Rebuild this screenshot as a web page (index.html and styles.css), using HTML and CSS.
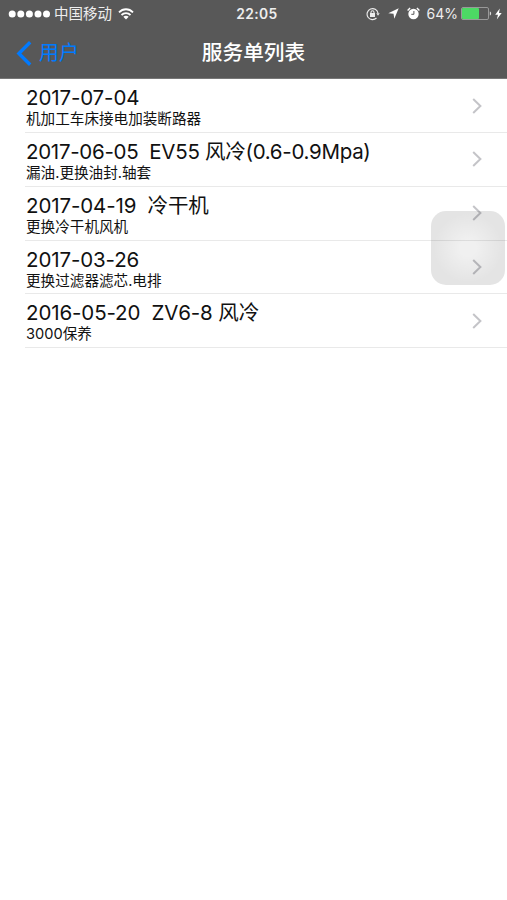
FILE: index.html
```html
<!DOCTYPE html>
<html lang="zh-CN">
<head>
    <meta charset="UTF-8">
    <meta name="viewport" content="width=device-width, initial-scale=1.0">
    <title>服务单列表</title>
    <link rel="stylesheet" href="styles.css">
</head>
<body>
    <header class="header">
        <div class="status">
            <div class="status-left">
                <svg class="signal" width="42" height="10" viewBox="0 0 42 10" fill="#fff">
                    <circle cx="4.2" cy="5" r="3.5"/><circle cx="12.8" cy="5" r="3.5"/><circle cx="21.4" cy="5" r="3.5"/><circle cx="30" cy="5" r="3.5"/><circle cx="38.5" cy="5" r="3.5"/>
                </svg>
                <span class="carrier">中国移动</span>
                <svg class="wifi" width="16" height="12" viewBox="0 0 16 12" fill="none" stroke="#fff" stroke-width="1.8">
                    <path d="M1 4.3C5 .2 11 .2 15 4.3M3.5 7C6 4.6 10 4.6 12.5 7"/>
                    <path d="M8 11.5L5.3 8.8C6.8 7.5 9.2 7.5 10.7 8.8Z" fill="#fff" stroke="none"/>
                </svg>
            </div>
            <div class="time">22:05</div>
            <div class="status-right">
                <svg class="lock" width="14" height="14" viewBox="0 0 14 14" fill="none" stroke="#eee" stroke-width="1.1">
                    <path d="M10.5 11A5.5 5.5 0 1 1 12 6.2"/>
                    <path d="M10.3 6.3H13.7L12 8.8Z" fill="#eee" stroke="none"/>
                    <rect x="4" y="6" width="5" height="4" fill="#eee" stroke="none"/>
                    <path d="M5 6.3V5.2a1.5 1.5 0 0 1 3 0V6.3"/>
                </svg>
                <svg class="location" width="11" height="11" viewBox="0 0 11 11" fill="#fff">
                    <path d="M10.7 .3L6.3 10.7L5.5 5.7L.3 5.2Z"/>
                </svg>
                <svg class="alarm" width="13" height="13" viewBox="0 0 13 13" fill="#fff">
                    <circle cx="6.5" cy="7" r="5.2"/>
                    <path d="M.6 3.4L3.1 1M9.9 1L12.4 3.4" stroke="#fff" stroke-width="1.4"/>
                    <path d="M6.9 4V7.3H4.3" fill="none" stroke="#585858" stroke-width="1"/>
                </svg>
                <span class="percent">64%</span>
                <svg class="battery" width="31" height="13" viewBox="0 0 31 13">
                    <rect x=".5" y=".5" width="27" height="12" rx="1.5" fill="none" stroke="#999"/>
                    <rect x="1" y="1" width="17" height="11" rx="1" fill="#4cd964"/>
                    <path d="M28.8 4.5C30.6 5 30.6 8 28.8 8.5Z" fill="#ddd"/>
                </svg>
                <svg class="bolt" width="7" height="12" viewBox="0 0 7 12" fill="#fff">
                    <path d="M4.8 .5L.2 6.7H3L1.8 11.5L6.7 5H4Z"/>
                </svg>
            </div>
        </div>
        <div class="navbar">
            <a class="back">
                <svg width="16" height="25" viewBox="0 0 16 25" fill="none" stroke="#007aff" stroke-width="3.4">
                    <path d="M14.2 1.3L2.9 12.5L14.2 23.7"/>
                </svg>
                <span>用户</span>
            </a>
            <h1 class="title">服务单列表</h1>
        </div>
    </header>

    <ul class="list">
        <li class="item">
            <div class="text">
                <div class="name">2017-07-04</div>
                <div class="note">机加工车床接电加装断路器</div>
            </div>
            <svg class="arrow" width="10" height="16" viewBox="0 0 10 16"><path d="M1.2 1L8.4 8L1.2 15"/></svg>
        </li>
        <li class="item">
            <div class="text">
                <div class="name name-long">2017-06-05&nbsp; EV55 风冷(0.6-0.9Mpa)</div>
                <div class="note">漏油.更换油封.轴套</div>
            </div>
            <svg class="arrow" width="10" height="16" viewBox="0 0 10 16"><path d="M1.2 1L8.4 8L1.2 15"/></svg>
        </li>
        <li class="item">
            <div class="text">
                <div class="name">2017-04-19&nbsp; 冷干机</div>
                <div class="note">更换冷干机风机</div>
            </div>
            <svg class="arrow" width="10" height="16" viewBox="0 0 10 16"><path d="M1.2 1L8.4 8L1.2 15"/></svg>
        </li>
        <li class="item">
            <div class="text">
                <div class="name">2017-03-26</div>
                <div class="note">更换过滤器滤芯.电排</div>
            </div>
            <svg class="arrow" width="10" height="16" viewBox="0 0 10 16"><path d="M1.2 1L8.4 8L1.2 15"/></svg>
        </li>
        <li class="item">
            <div class="text">
                <div class="name">2016-05-20&nbsp; ZV6-8 风冷</div>
                <div class="note">3000保养</div>
            </div>
            <svg class="arrow" width="10" height="16" viewBox="0 0 10 16"><path d="M1.2 1L8.4 8L1.2 15"/></svg>
        </li>
    </ul>

    <div class="touch"></div>
</body>
</html>
```
FILE: styles.css
```css
* {
    box-sizing: border-box;
}
body {
    margin: 0;
    background-color: #fff;
    color: #111;
    font-family: Inter, "Noto Sans CJK SC", sans-serif;
}
svg {
    display: block;
    flex: none;
}
.header {
    height: 79px;
    background-color: #585858;
    border-bottom: 1px solid #777;
    color: #fff;
}
.status {
    display: grid;
    grid-template-columns: 1fr auto 1fr;
    align-items: center;
    height: 27px;
    padding: 0 5px 0 8px;
}
.status-left,
.status-right {
    display: flex;
    align-items: center;
}
.status-right {
    justify-content: flex-end;
}
.carrier {
    margin: 0 6px 0 4px;
    font-size: 14.5px;
    line-height: 20px;
    color: #eee;
}
.time {
    padding-left: 4px;
    font-size: 13.8px;
    font-weight: 600;
    letter-spacing: 0.4px;
    color: #eee;
}
.lock {
    margin-right: 8px;
}
.location {
    margin-right: 8px;
}
.percent {
    margin: 0 3px 0 7px;
    font-size: 14px;
    color: #eee;
}
.bolt {
    margin-left: 3px;
}
.navbar {
    display: grid;
    grid-template-columns: 1fr auto 1fr;
    align-items: center;
    height: 52px;
    padding: 0 16px;
}
.back {
    display: flex;
    align-items: center;
    gap: 7px;
    font-size: 20px;
    line-height: 28px;
    color: #007aff;
}
.title {
    margin: 0;
    font-size: 20.7px;
    font-weight: 500;
    line-height: 28px;
}
.list {
    margin: 0;
    padding: 0.3px 0 0 25px;
    list-style: none;
}
.item {
    display: flex;
    align-items: center;
    justify-content: space-between;
    height: 53.8px;
    padding-right: 25px;
    border-bottom: 1px solid #e9e9e9;
}
.text {
    padding: 3px 0 0 1px;
}
.name {
    font-size: 20.5px;
    line-height: 24px;
    letter-spacing: -0.12px;
    white-space: nowrap;
}
.name-long {
    letter-spacing: -0.29px;
}
.note {
    font-size: 14.6px;
    line-height: 18px;
    white-space: nowrap;
}
.arrow {
    fill: none;
    stroke: #c4c4c8;
    stroke-width: 2;
}
/* floating assistive button */
.touch {
    position: absolute;
    top: 211px;
    left: 431px;
    width: 74px;
    height: 74px;
    border-radius: 15px;
    background: radial-gradient(circle, rgba(0, 0, 0, 0.06) 15%, rgba(0, 0, 0, 0.105) 65%);
}
```
